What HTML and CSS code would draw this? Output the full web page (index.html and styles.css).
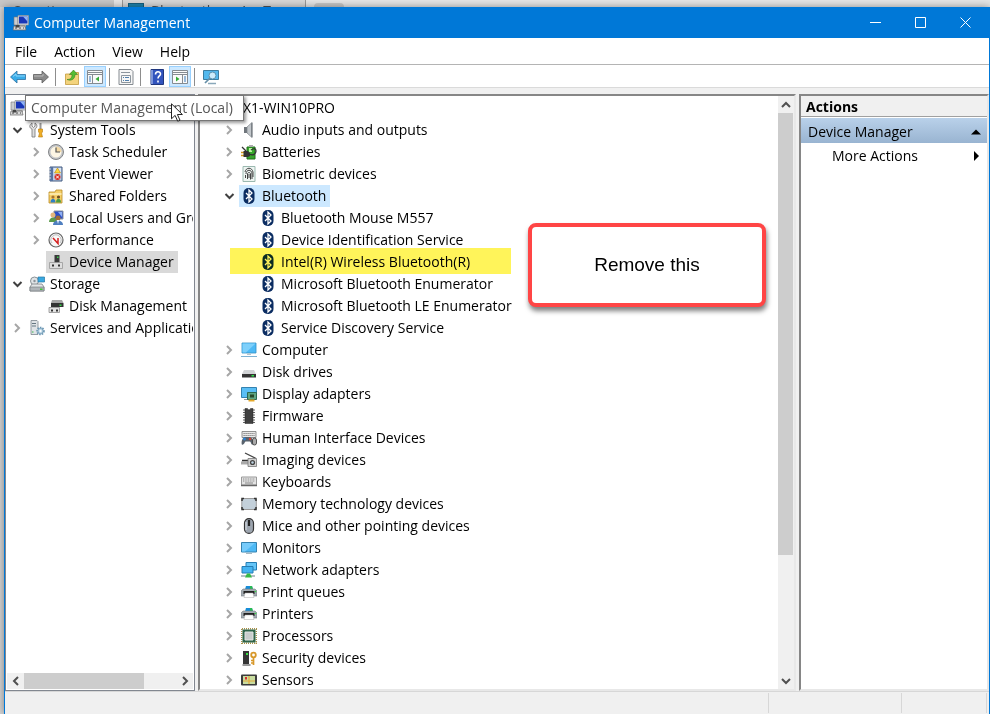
FILE: index.html
```
<!DOCTYPE html>
<html lang="en">
<head>
  <meta charset="UTF-8" />
  <meta name="viewport" content="width=device-width, initial-scale=1.0"/>
  <title>Computer Management</title>
  <link rel="stylesheet" href="styles.css">
</head>
<body>
  <!-- icon set -->
  <svg class="sprite" aria-hidden="true">
    <symbol id="right" viewBox="0 0 16 16"><path d="M6 4l4 4-4 4" fill="none" stroke="#a6a6a6" stroke-width="2"/></symbol>
    <symbol id="down" viewBox="0 0 16 16"><path d="M4.500 6 8.500 10l4-4" fill="none" stroke="#404040" stroke-width="2"/></symbol>
    <symbol id="mgmt" viewBox="0 0 16 16"><path d="M1 2h4v8H1z" fill="#c9cdd0" stroke="#777" stroke-width=".6"/><path d="M5 .5h10.500v9.500H5z" fill="#d8dce0" stroke="#8a8f94" stroke-width=".7"/><path d="M6 1.500h8.500v7H6z" fill="#1836b8"/><path d="M10 1.500h4.500v5z" fill="#8fb4f5"/><path d="M7 10h6v2H7z" fill="#aaa"/><path d="M1 11h11l1 4H0z" fill="#d9d9d9" stroke="#666" stroke-width=".7"/><path d="M3 10.500h3V12H3zM2 13h2M6 13h2M10 13h1" fill="#444" stroke="#444"/></symbol>
    <symbol id="tools" viewBox="0 0 16 16"><path d="M3 1v3l1.500 1.500L6 4V1c3 2 2 5 0 6v8H3V7C0 6 0 3 3 1z" fill="#ddd" stroke="#777" stroke-width=".8"/><path d="M10.500 1h2v6h-2z" fill="#999"/><path d="M9.500 7h4v3l-1 1 1 4h-4l1-4-1-1z" fill="#f0ae24" stroke="#b7780c" stroke-width=".6"/></symbol>
    <symbol id="clock" viewBox="0 0 16 16"><circle cx="8" cy="8" r="7.500" fill="#c4c6c9" stroke="#77797c" stroke-width=".9"/><circle cx="8" cy="8" r="5.500" fill="#fdf6e4"/><path d="M8 2.500A5.500 5.500 0 0 1 13.500 8H8z" fill="#f3d9a4"/><path d="M8 3.500V8h4" fill="none" stroke="#555" stroke-width="1.200"/></symbol>
    <symbol id="event" viewBox="0 0 16 16"><path d="M2 1h12v14H2z" fill="#b9cce6" stroke="#40587f"/><path d="M2 1h3v14H2z" fill="#5774a3"/><path d="M1 3h2M1 6h2M1 9h2M1 12h2" stroke="#ddd"/><path d="M6 3h7M6 5h7M6 7h7" stroke="#fff"/><path d="m9.500 2 3 5h-6z" fill="#ffd83b" stroke="#b98400" stroke-width=".6"/><circle cx="9.500" cy="11" r="3" fill="#d82c20"/><path d="m8 9.500 3 3m0-3-3 3" stroke="#fff"/></symbol>
    <symbol id="folder" viewBox="0 0 16 16"><path d="M1 4h6l1-2h6v13H1z" fill="#f5cf68" stroke="#b98b25" stroke-width=".8"/><path d="M1.500 5h12v2h-12z" fill="#fbe7a6"/><circle cx="5" cy="9" r="1.600" fill="#a87230"/><circle cx="10.500" cy="9" r="1.600" fill="#6c4b22"/><path d="M2.500 14.500c0-5 5-5 5 0z" fill="#2f7fc6"/><path d="M8 14.500c0-5 5-5 5 0z" fill="#4c9d41"/></symbol>
    <symbol id="users" viewBox="0 0 16 16"><path d="M6 1h9v8H6z" fill="#2a4ec7" stroke="#8c9299"/><path d="M10 2h4v5z" fill="#8fb0f3"/><circle cx="5" cy="5" r="2.500" fill="#e5b77c"/><path d="M1 12c0-6 8-6 8 0z" fill="#5b9a4a"/><circle cx="10" cy="8" r="2.500" fill="#9d6b37"/><path d="M5 15c0-6 10-6 10 0z" fill="#4f7fc0"/><path d="m9 10 1 4 1-4z" fill="#fff"/></symbol>
    <symbol id="perf" viewBox="0 0 16 16"><circle cx="8" cy="8" r="7" fill="#f8f8f8" stroke="#666" stroke-width="1.200"/><path d="M4 11a5 5 0 1 1 8 0" fill="none" stroke="#bbb"/><path d="m5 6 5 5.500V6" fill="none" stroke="#d41f1f" stroke-width="1.500"/></symbol>
    <symbol id="device" viewBox="0 0 16 16"><path d="M6.500 1h5v8h-5z" fill="#3a3a3a"/><path d="M9 2.500h1.500V4H9z" fill="#38d04b"/><path d="M1.500 8.500h13v6h-13z" fill="#dedede" stroke="#999" stroke-width=".8"/><path d="M4 10.500h2v2H4zM10 10.500h2v2h-2z" fill="#333"/></symbol>
    <symbol id="storage" viewBox="0 0 16 16"><circle cx="5.500" cy="5" r="4" fill="#e0e4e7" stroke="#8a9297"/><circle cx="5.500" cy="5" r="1.200" fill="#8b9398"/><path d="M9 1h6.500v5H9z" fill="#3aa8e0" stroke="#2878a4" stroke-width=".7"/><path d="m3 8-2 3v4h14v-4l-2-3z" fill="#e2e5e7" stroke="#7b8186" stroke-width=".8"/><path d="M1 11h14v4H1z" fill="#afb4b8" stroke="#6f757a" stroke-width=".6"/><path d="M11 12.500h2.500V14H11z" fill="#42c838"/></symbol>
    <symbol id="diskmgmt" viewBox="0 0 16 16"><path d="m4 2-1 3h12.500L14 2z" fill="#a5a5a5"/><path d="M3 5h12.500v4H3z" fill="#333"/><path d="M11.500 6.500h2V8h-2z" fill="#35d84a"/><path d="M1 9.500h10.500v5H1z" fill="#e2e2e2" stroke="#8f8f8f" stroke-width=".8"/><path d="M3 11.500h2v2H3zM8 11.500h2v2H8z" fill="#333"/></symbol>
    <symbol id="services" viewBox="0 0 16 16"><path d="M2 .5h6l1 1v13H2z" fill="#dfe3e6" stroke="#7c868e" stroke-width=".8"/><path d="M3 3.500h4M3 6h4" stroke="#657681"/><path d="M3 12h1.500" stroke="#36b34a"/><circle cx="11.500" cy="11" r="3.400" fill="#d4e5f0" stroke="#6e98b4" stroke-width="1.800" stroke-dasharray="1.500 1"/><circle cx="11.500" cy="11" r="2.600" fill="#c4dcea" stroke="#6e98b4" stroke-width=".8"/><circle cx="11.500" cy="11" r="1" fill="#fff"/></symbol>
    <symbol id="audio" viewBox="0 0 16 16"><path d="M3 5h3.500v6H3z" fill="#6f757b"/><path d="m6 5 5-4.500v15L6 11z" fill="#c2c7cb" stroke="#7d8388" stroke-width=".7"/><path d="M10 1.500v13l1.500 1V.5z" fill="#7c8287"/></symbol>
    <symbol id="battery" viewBox="0 0 16 16"><path d="M6 3h8v12H6z" fill="#37a92b" stroke="#206e1a"/><path d="M8 1h4v2H8z" fill="#aaa"/><path d="M8 4h3v4H8z" fill="#b8f5a0"/><path d="M0 8.500h3M0 11.500h3" stroke="#d19a1d" stroke-width="1.300"/><path d="M2.500 7H7l2 2v3l-2 1H2.500z" fill="#333"/><path d="M8 10c4 2 7 0 7-3s-2-3-5-1M1 3l4 4" fill="none" stroke="#333" stroke-width="1.300"/></symbol>
    <symbol id="finger" viewBox="0 0 16 16"><path d="M2 .5h12v15H2z" fill="#eef5f2" stroke="#9bb9b0"/><g fill="none" stroke="#444" stroke-width="1"><path d="M4 6c1-5 7-5 8 0v5M5 8c0-5 6-5 6 0v5M6.500 13V8c0-2 3-2 3 0v5.500M8 8v4M4.500 9v3"/></g></symbol>
    <symbol id="bt" viewBox="0 0 16 16"><rect x="2.500" y="0" width="11" height="16" rx="5" fill="#0b2d62"/><path d="m5 5 6 6-3 3V2l3 3-6 6" fill="none" stroke="#fff" stroke-width="1.300"/></symbol>
    <symbol id="computer" viewBox="0 0 16 16"><path d="M1 1h14v10H1z" fill="#4eb9f5" stroke="#318fc5" stroke-width=".8"/><path d="M1.500 1.500h13L5 10.500H1.500z" fill="#7ed0fb"/><path d="M6 11.500h4V13H6z" fill="#bbc5cb"/><path d="M0 14.500h16" stroke="#7fb2d3"/></symbol>
    <symbol id="disk" viewBox="0 0 16 16"><path d="m3 6-2 4h14l-2-4z" fill="#d1d3d5"/><path d="M1 10h14v3.500H1z" fill="#333"/><path d="M10.500 11H13v1.500h-2.500z" fill="#2fe048"/></symbol>
    <symbol id="display" viewBox="0 0 16 16"><path d="M.5 1.500h15v10H.5z" fill="#5abef5" stroke="#3482b0"/><path d="M3 13h4v1H3z" fill="#999"/><path d="M6.500 6.500h9v7h-9z" fill="#5fa583" stroke="#2c6850"/><path d="M9 8.500h4v3H9z" fill="#274929"/><path d="M7.500 13.500h6v2h-6z" fill="#e5a82a"/></symbol>
    <symbol id="chip" viewBox="0 0 16 16"><path d="M2 2h12M2 4.500h12M2 7h12M2 9.500h12M2 12h12M2 14.500h12" stroke="#666" stroke-width="1.200"/><path d="M4 .5h2.500c0 2 3 2 3 0H12v15H4z" fill="#404040" stroke="#222" stroke-width=".5"/></symbol>
    <symbol id="hid" viewBox="0 0 16 16"><path d="M1 1.500h14v6H1z" fill="#e8e8e8" stroke="#777" stroke-width=".8"/><path d="M2.500 3.500h11M2.500 5.500h11" stroke="#777" stroke-dasharray="1.200 .8"/><path d="M.8 14.500C0 11 2 7 4 7h5c2 0 4 4 3 7.500-2 1-2-3-3-3H4.500c-1 1-1.700 4-3.700 3z" fill="#59636d"/><circle cx="3.500" cy="9" r="1.400" fill="#2d82d4"/><circle cx="9" cy="9" r="1.200" fill="#d44132"/><rect x="11.500" y="8" width="4" height="7" rx="2" fill="#aaa" stroke="#444" stroke-width=".9"/></symbol>
    <symbol id="imaging" viewBox="0 0 16 16"><path d="m4 1 11 5.500" stroke="#444" stroke-width="1.300"/><path d="M0 9.500h8v3H0z" fill="#aaa"/><path d="M1 8.500h6" stroke="#333" stroke-width="1.500"/><path d="M7 6.500h8.500v8H7z" fill="#d0d0d0" stroke="#777" stroke-width=".8"/><circle cx="11.500" cy="10.500" r="2.600" fill="#444"/><circle cx="11.500" cy="10.500" r="1.200" fill="#bed4e4"/></symbol>
    <symbol id="keyboard" viewBox="0 0 16 16"><path d="M.5 3h15v8H.5z" fill="#e3e3e3" stroke="#999"/><path d="M2 5h12M2 7h12" stroke="#888" stroke-dasharray="1 .7"/><path d="M4 9h8" stroke="#888"/><path d="M0 11.500h16" stroke="#666" stroke-width="1.500"/></symbol>
    <symbol id="memory" viewBox="0 0 16 16"><rect x=".8" y="2.500" width="14.500" height="11" rx="1" fill="#c3d0da" stroke="#999"/><path d="M1 5V2.500h2M13 2.500h2V5M15 11v2.500h-2M3 13.500H1V11" fill="none" stroke="#333" stroke-width="1.500"/></symbol>
    <symbol id="mouse" viewBox="0 0 16 16"><rect x="3.500" y=".6" width="9" height="14.800" rx="4.500" fill="#9da5af" stroke="#333" stroke-width="1.200"/><path d="M8 2v6" stroke="#222" stroke-width="2.200"/><path d="M5 4v8" stroke="#dce1e7"/></symbol>
    <symbol id="monitor" viewBox="0 0 16 16"><path d="M.5 2.500h15v9.500H.5z" fill="#4eb9f5" stroke="#3482b0"/><path d="M1 3h13L4 11.500H1z" fill="#76cbfb"/><path d="M5 13.500h6" stroke="#a8b7c0"/></symbol>
    <symbol id="network" viewBox="0 0 16 16"><path d="M5 .5h10.500v7.500H5z" fill="#65c5f8" stroke="#247db4"/><path d="M1 4.500h11V11H1z" fill="#44b4f2" stroke="#247db4"/><path d="M0 14h14" stroke="#b5c0c5" stroke-width="2"/><path d="M6 11.500h3l2 4H4z" fill="#36ba45"/></symbol>
    <symbol id="printer" viewBox="0 0 16 16"><path d="M5 2h6l1 3.500H4z" fill="#168dd8"/><path d="M9 2h2l1 3.500H9z" fill="#2abb52"/><path d="M2 5h12l2 2v5H0V7z" fill="#a3abb1" stroke="#777e83" stroke-width=".6"/><path d="M2.500 7h11v3h-11z" fill="#222"/><path d="m4 9-1 4.500h10L12 9z" fill="#fff" stroke="#aaa" stroke-width=".5"/><circle cx="14.500" cy="7.500" r=".8" fill="#36df45"/></symbol>
    <symbol id="cpu" viewBox="0 0 16 16"><path d="M1 .7h15M1 15.300h15M.7 1v15M15.300 1v15" stroke="#a89047" stroke-dasharray="1 1" stroke-width="1.400"/><path d="M1.500 1.500h13v13h-13z" fill="#2f6449"/><path d="M4 4h8v8H4z" fill="#c9cdcc" stroke="#e3e6e5"/></symbol>
    <symbol id="security" viewBox="0 0 16 16"><path d="M2 1h6v13H2z" fill="#353535"/><path d="M1.500 15h8" stroke="#333"/><path d="M5 3h2v2H5z" fill="#38df43"/><circle cx="12.500" cy="5" r="2.300" fill="none" stroke="#d7982a" stroke-width="1.800"/><path d="M12.500 7.500V15M12 10.500h-2M12 13h-2" stroke="#d7982a" stroke-width="1.700"/></symbol>
    <symbol id="sensor" viewBox="0 0 16 16"><rect x="0" y="2.500" width="16" height="11" rx="1" fill="#3d3d3d"/><path d="M2 4h12v8H2z" fill="#c9dda0"/><path d="M8 4v8M2 9h12" stroke="#e5aa3b" stroke-width="1.200"/><path d="M4 5h2v2.500H4z" fill="#d92f2f"/></symbol>
    <symbol id="back" viewBox="0 0 16 16"><path d="m.5 8 6.500-6v3.500h8.500v5H7V14z" fill="#39ace8" stroke="#2c6f9f" stroke-width=".8"/><path d="M3 7.500 6 5v2h9" fill="none" stroke="#8bd6fa"/></symbol>
    <symbol id="forward" viewBox="0 0 16 16"><path d="M15.500 8 9 2v3.500H.5v5H9V14z" fill="#8a8a8a" stroke="#5d5d5d" stroke-width=".8"/><path d="M1 7h9V5" fill="none" stroke="#b9b9b9"/></symbol>
    <symbol id="up" viewBox="0 0 16 16"><path d="M1.500 5H6l1-1.500h7.500v12h-13z" fill="#f3d37c" stroke="#c39b3d" stroke-width=".8"/><path d="M3 10.500c4 0 5-2 5-5H5.500l4-4.500 4 4.500H11c0 4-3 7-8 5z" fill="#55bd35" stroke="#37811f" stroke-width=".6"/></symbol>
    <symbol id="tree-pane" viewBox="0 0 16 16"><path d="M.5 1.500h15v13H.5z" fill="#fafafa" stroke="#858b91"/><path d="M1 3.500h14M1 5.500h14" stroke="#858b91"/><path d="M5.500 6v9" stroke="#858b91"/><path d="M2 8h2M2 10h2M2 12h2" stroke="#3979b7"/><path d="M12 7.500v5L8.500 10z" fill="#35aa36"/></symbol>
    <symbol id="props" viewBox="0 0 16 16"><path d="M1 .5h12l2 2v13H1z" fill="#f6f6f6" stroke="#858b91"/><path d="M3 3.500h9M3.500 6.500h9v7h-9z" fill="none" stroke="#8c959d"/><path d="M5 8.500h1M7 8.500h4M5 11.500h1M7 11.500h4" stroke="#507fac"/></symbol>
    <symbol id="help" viewBox="0 0 16 16"><path d="M2 .5h12.500v15H2z" fill="#3153bd" stroke="#20377e"/><path d="M2 1h2v14H2z" fill="#7d95d9"/><path d="M6.500 5.500c0-3.500 5-3.500 5-.5 0 2-2.500 2-2.500 4.500M9 11.500v2" fill="none" stroke="#fff" stroke-width="1.600"/></symbol>
    <symbol id="action-pane" viewBox="0 0 16 16"><path d="M.5 1.500h15v13H.5z" fill="#fafafa" stroke="#858b91"/><path d="M1 3.500h14M1 5.500h14M10.500 6v9" stroke="#858b91"/><path d="M12 8h2M12 10h2M12 12h2" stroke="#3979b7"/><path d="M4 7.500v5L7.500 10z" fill="#35aa36"/></symbol>
    <symbol id="scan" viewBox="0 0 16 16"><path d="M.5 1.500h15v9H.5z" fill="#53b9ee" stroke="#3c7d9f"/><path d="M5 14.500h8" stroke="#8aa8ba" stroke-width="1.500"/><circle cx="9.500" cy="6.500" r="3.500" fill="#ccecfb" stroke="#5b91ae"/><path d="m7 9-5 5" stroke="#668fa7" stroke-width="1.700"/></symbol>
  </svg>

  <div class="tabs" aria-hidden="true">
    <span class="tab tab-first">n Questions</span>
    <span class="tab tab-active"><i class="favicon"></i>Bluetooth on A... T</span>
    <span class="tab tab-new"></span>
  </div>

  <div class="window">
    <header class="titlebar">
      <svg class="icon"><use href="#mgmt"/></svg>
      <h1>Computer Management</h1>
      <div class="controls">
        <button type="button" aria-label="Minimize"><svg viewBox="0 0 11 11"><path d="M0 5.500h11"/></svg></button>
        <button type="button" aria-label="Maximize"><svg viewBox="0 0 11 11"><path d="M.5.5h10v10H.5z"/></svg></button>
        <button type="button" aria-label="Close"><svg viewBox="0 0 11 11"><path d="m.5.5 10 10m0-10-10 10"/></svg></button>
      </div>
    </header>

    <nav class="menubar">
      <button type="button">File</button>
      <button type="button">Action</button>
      <button type="button">View</button>
      <button type="button">Help</button>
    </nav>

    <div class="toolbar">
      <button type="button" aria-label="Back"><svg class="icon"><use href="#back"/></svg></button>
      <button type="button" aria-label="Forward"><svg class="icon"><use href="#forward"/></svg></button>
      <span class="sep"></span>
      <button type="button" aria-label="Up one level"><svg class="icon"><use href="#up"/></svg></button>
      <button type="button" class="on" aria-label="Console tree"><svg class="icon"><use href="#tree-pane"/></svg></button>
      <span class="sep"></span>
      <button type="button" aria-label="Properties"><svg class="icon"><use href="#props"/></svg></button>
      <span class="sep"></span>
      <button type="button" aria-label="Help"><svg class="icon"><use href="#help"/></svg></button>
      <button type="button" class="on" aria-label="Action pane"><svg class="icon"><use href="#action-pane"/></svg></button>
      <span class="sep"></span>
      <button type="button" aria-label="Scan for hardware changes"><svg class="icon"><use href="#scan"/></svg></button>
    </div>

    <main class="panes">
      <section class="pane console">
        <div class="tree-view">
          <div class="row root"><span class="label"><svg class="icon"><use href="#mgmt"/></svg></span></div>
          <div class="tooltip">Computer Management (Local)
            <svg class="cursor" viewBox="0 0 12 19"><path d="M.5.8v15l3.600-3.400 2.600 5.800 2.300-1-2.600-5.700h5z" fill="#fff" stroke="#222"/></svg>
          </div>
          <ul class="tree">
            <li>
              <div class="row"><button type="button" class="toggle" aria-label="Collapse"><svg class="icon"><use href="#down"/></svg></button><span class="label"><svg class="icon"><use href="#tools"/></svg>System Tools</span></div>
              <ul>
                <li class="row"><button type="button" class="toggle" aria-label="Expand"><svg class="icon"><use href="#right"/></svg></button><span class="label"><svg class="icon"><use href="#clock"/></svg>Task Scheduler</span></li>
                <li class="row"><button type="button" class="toggle" aria-label="Expand"><svg class="icon"><use href="#right"/></svg></button><span class="label"><svg class="icon"><use href="#event"/></svg>Event Viewer</span></li>
                <li class="row"><button type="button" class="toggle" aria-label="Expand"><svg class="icon"><use href="#right"/></svg></button><span class="label"><svg class="icon"><use href="#folder"/></svg>Shared Folders</span></li>
                <li class="row"><button type="button" class="toggle" aria-label="Expand"><svg class="icon"><use href="#right"/></svg></button><span class="label"><svg class="icon"><use href="#users"/></svg>Local Users and Groups</span></li>
                <li class="row"><button type="button" class="toggle" aria-label="Expand"><svg class="icon"><use href="#right"/></svg></button><span class="label"><svg class="icon"><use href="#perf"/></svg>Performance</span></li>
                <li class="row leaf"><span class="label current"><svg class="icon"><use href="#device"/></svg>Device Manager</span></li>
              </ul>
            </li>
            <li>
              <div class="row"><button type="button" class="toggle" aria-label="Collapse"><svg class="icon"><use href="#down"/></svg></button><span class="label"><svg class="icon"><use href="#storage"/></svg>Storage</span></div>
              <ul>
                <li class="row leaf"><span class="label"><svg class="icon"><use href="#diskmgmt"/></svg>Disk Management</span></li>
              </ul>
            </li>
            <li class="row"><button type="button" class="toggle" aria-label="Expand"><svg class="icon"><use href="#right"/></svg></button><span class="label"><svg class="icon"><use href="#services"/></svg>Services and Applications</span></li>
          </ul>
        </div>
        <div class="scroll scroll-x">
          <button type="button" aria-label="Scroll left"><svg viewBox="0 0 10 10"><path d="M7 1 3 5l4 4"/></svg></button>
          <div class="track"><div class="thumb"></div></div>
          <button type="button" aria-label="Scroll right"><svg viewBox="0 0 10 10"><path d="m3 1 4 4-4 4"/></svg></button>
        </div>
      </section>

      <section class="pane sunken devices">
        <div class="tree-view">
          <div class="row root"><span class="label"><svg class="icon"><use href="#computer"/></svg>X1-WIN10PRO</span></div>
          <ul class="tree">
            <li class="row"><button type="button" class="toggle" aria-label="Expand"><svg class="icon"><use href="#right"/></svg></button><span class="label"><svg class="icon"><use href="#audio"/></svg>Audio inputs and outputs</span></li>
            <li class="row"><button type="button" class="toggle" aria-label="Expand"><svg class="icon"><use href="#right"/></svg></button><span class="label"><svg class="icon"><use href="#battery"/></svg>Batteries</span></li>
            <li class="row"><button type="button" class="toggle" aria-label="Expand"><svg class="icon"><use href="#right"/></svg></button><span class="label"><svg class="icon"><use href="#finger"/></svg>Biometric devices</span></li>
            <li>
              <div class="row"><button type="button" class="toggle" aria-label="Collapse"><svg class="icon"><use href="#down"/></svg></button><span class="label selected"><svg class="icon"><use href="#bt"/></svg>Bluetooth</span></div>
              <ul>
                <li class="row leaf"><span class="label"><svg class="icon"><use href="#bt"/></svg>Bluetooth Mouse M557</span></li>
                <li class="row leaf"><span class="label"><svg class="icon"><use href="#bt"/></svg>Device Identification Service</span></li>
                <li class="row leaf marked"><span class="label"><svg class="icon"><use href="#bt"/></svg>Intel(R) Wireless Bluetooth(R)</span></li>
                <li class="row leaf"><span class="label"><svg class="icon"><use href="#bt"/></svg>Microsoft Bluetooth Enumerator</span></li>
                <li class="row leaf"><span class="label"><svg class="icon"><use href="#bt"/></svg>Microsoft Bluetooth LE Enumerator</span></li>
                <li class="row leaf"><span class="label"><svg class="icon"><use href="#bt"/></svg>Service Discovery Service</span></li>
              </ul>
            </li>
            <li class="row"><button type="button" class="toggle" aria-label="Expand"><svg class="icon"><use href="#right"/></svg></button><span class="label"><svg class="icon"><use href="#computer"/></svg>Computer</span></li>
            <li class="row"><button type="button" class="toggle" aria-label="Expand"><svg class="icon"><use href="#right"/></svg></button><span class="label"><svg class="icon"><use href="#disk"/></svg>Disk drives</span></li>
            <li class="row"><button type="button" class="toggle" aria-label="Expand"><svg class="icon"><use href="#right"/></svg></button><span class="label"><svg class="icon"><use href="#display"/></svg>Display adapters</span></li>
            <li class="row"><button type="button" class="toggle" aria-label="Expand"><svg class="icon"><use href="#right"/></svg></button><span class="label"><svg class="icon"><use href="#chip"/></svg>Firmware</span></li>
            <li class="row"><button type="button" class="toggle" aria-label="Expand"><svg class="icon"><use href="#right"/></svg></button><span class="label"><svg class="icon"><use href="#hid"/></svg>Human Interface Devices</span></li>
            <li class="row"><button type="button" class="toggle" aria-label="Expand"><svg class="icon"><use href="#right"/></svg></button><span class="label"><svg class="icon"><use href="#imaging"/></svg>Imaging devices</span></li>
            <li class="row"><button type="button" class="toggle" aria-label="Expand"><svg class="icon"><use href="#right"/></svg></button><span class="label"><svg class="icon"><use href="#keyboard"/></svg>Keyboards</span></li>
            <li class="row"><button type="button" class="toggle" aria-label="Expand"><svg class="icon"><use href="#right"/></svg></button><span class="label"><svg class="icon"><use href="#memory"/></svg>Memory technology devices</span></li>
            <li class="row"><button type="button" class="toggle" aria-label="Expand"><svg class="icon"><use href="#right"/></svg></button><span class="label"><svg class="icon"><use href="#mouse"/></svg>Mice and other pointing devices</span></li>
            <li class="row"><button type="button" class="toggle" aria-label="Expand"><svg class="icon"><use href="#right"/></svg></button><span class="label"><svg class="icon"><use href="#monitor"/></svg>Monitors</span></li>
            <li class="row"><button type="button" class="toggle" aria-label="Expand"><svg class="icon"><use href="#right"/></svg></button><span class="label"><svg class="icon"><use href="#network"/></svg>Network adapters</span></li>
            <li class="row"><button type="button" class="toggle" aria-label="Expand"><svg class="icon"><use href="#right"/></svg></button><span class="label"><svg class="icon"><use href="#printer"/></svg>Print queues</span></li>
            <li class="row"><button type="button" class="toggle" aria-label="Expand"><svg class="icon"><use href="#right"/></svg></button><span class="label"><svg class="icon"><use href="#printer"/></svg>Printers</span></li>
            <li class="row"><button type="button" class="toggle" aria-label="Expand"><svg class="icon"><use href="#right"/></svg></button><span class="label"><svg class="icon"><use href="#cpu"/></svg>Processors</span></li>
            <li class="row"><button type="button" class="toggle" aria-label="Expand"><svg class="icon"><use href="#right"/></svg></button><span class="label"><svg class="icon"><use href="#security"/></svg>Security devices</span></li>
            <li class="row"><button type="button" class="toggle" aria-label="Expand"><svg class="icon"><use href="#right"/></svg></button><span class="label"><svg class="icon"><use href="#sensor"/></svg>Sensors</span></li>
          </ul>
        </div>
        <div class="scroll scroll-y">
          <button type="button" aria-label="Scroll up"><svg viewBox="0 0 10 10"><path d="m1 7 4-4 4 4"/></svg></button>
          <div class="track"><div class="thumb"></div></div>
          <button type="button" aria-label="Scroll down"><svg viewBox="0 0 10 10"><path d="m1 3 4 4 4-4"/></svg></button>
        </div>
        <div class="callout">Remove this</div>
      </section>

      <aside class="pane sunken actions">
        <h2>Actions</h2>
        <button type="button" class="group">Device Manager<svg class="arrow" viewBox="0 0 10 10"><path d="M0 7.500 5 2.500l5 5z"/></svg></button>
        <button type="button" class="more">More Actions<svg class="arrow" viewBox="0 0 10 10"><path d="m3 0 5 5-5 5z"/></svg></button>
      </aside>
    </main>

    <footer class="statusbar"><span></span><span></span><span></span></footer>
  </div>
</body>
</html>
```
FILE: styles.css
```
* {
  box-sizing: border-box;
}

body {
  margin: 0;
  height: 100vh;
  padding: 7px 0 0 4px;
  overflow: hidden;
  background-color: #d4d4d4;
  font-family: "Open Sans", "Noto Sans", sans-serif;
  font-size: 14px;
  line-height: 22px;
  color: #000;
}

ul {
  list-style: none;
  margin: 0;
  padding: 0;
}

button {
  padding: 0;
  border: none;
  background: none;
  font: inherit;
  color: inherit;
}

.sprite {
  position: absolute;
  width: 0;
  height: 0;
}

.icon {
  display: block;
  flex: none;
  width: 16px;
  height: 16px;
}

/* browser tabs behind the window */
.tabs {
  position: absolute;
  top: 0;
  left: 0;
  right: 0;
  height: 7px;
  display: flex;
  gap: 8px;
  overflow: hidden;
  background-color: #e6e6e6;
  color: #555;
}

.tab {
  height: 30px;
  overflow: hidden;
  white-space: nowrap;
  background-color: #c8c8c8;
}

.tab-first {
  width: 114px;
}

.tab-active {
  display: flex;
  gap: 7px;
  width: 184px;
  padding-left: 5px;
  background-color: #d8d8d8;
  border-left: 1px solid #999;
  border-right: 1px solid #999;
}

.favicon {
  width: 16px;
  height: 16px;
  margin-top: 3px;
  background-color: #1d83ae;
  border: 1px solid #155f7f;
}

.tab-new {
  width: 30px;
  height: 20px;
  margin-top: 3px;
  border-radius: 4px;
}

.window {
  position: relative;
  display: flex;
  flex-direction: column;
  height: 100%;
  background-color: #f0f0f0;
  border-left: 1px solid #0078d7;
  border-right: 1px solid #0078d7;
  box-shadow: 0 0 8px rgba(0, 0, 0, 0.4);
}

.titlebar {
  display: flex;
  align-items: center;
  gap: 5px;
  height: 31px;
  padding: 0 1px 0 8px;
  background-color: #0078d7;
  color: #fff;
}

.titlebar h1 {
  margin: 0;
  flex: 1;
  font-size: 14px;
  font-weight: normal;
}

.controls {
  display: flex;
}

.controls button {
  display: flex;
  align-items: center;
  justify-content: center;
  width: 45px;
  height: 31px;
}

.controls svg {
  width: 11px;
  height: 11px;
  fill: none;
  stroke: #fff;
}

.menubar {
  display: flex;
  gap: 17px;
  height: 27px;
  padding: 3px 10px 1px;
  background-color: #fff;
  border-bottom: 1px solid #b4b4b4;
}

.toolbar {
  display: flex;
  align-items: center;
  gap: 1px;
  height: 23px;
  padding: 1px 0 0 2px;
  background-color: #fff;
  border-bottom: 1px solid #dadada;
}

.toolbar button {
  display: flex;
  align-items: center;
  justify-content: center;
  width: 22px;
  height: 21px;
}

.toolbar .on {
  background-color: #cce8ff;
  border: 1px solid #99d1ff;
}

.sep {
  width: 1px;
  height: 18px;
  margin: 0 4px 0 2px;
  background-color: #8d8d8d;
}

.panes {
  flex: 1;
  min-height: 0;
  display: flex;
  gap: 3px;
  padding-top: 6px;
}

.pane {
  background-color: #fff;
}

.sunken {
  border: 2px solid;
  border-color: #868686 #e8e8e8 #e8e8e8 #868686;
}

.console {
  position: relative;
  display: flex;
  flex-direction: column;
  width: 190px;
  padding: 1px;
  border: 1px solid #828790;
}

.tree-view {
  flex: 1;
  min-width: 0;
  min-height: 0;
  padding-top: 1px;
  overflow: hidden;
}

.row {
  position: relative;
  display: flex;
  height: 22px;
}

.root {
  padding-left: 1px;
}

.tree ul {
  padding-left: 19px;
}

.leaf {
  padding-left: 20px;
}

.toggle {
  display: flex;
  flex: none;
  align-items: center;
  justify-content: center;
  width: 20px;
}

.label {
  display: flex;
  flex: none;
  align-items: center;
  gap: 5px;
  padding: 0 4px 0 2px;
  white-space: nowrap;
}

.current {
  background-color: #d9d9d9;
}

.selected {
  background-color: #cce8ff;
}

/* yellow marker stroke over one device */
.marked::after {
  content: "";
  position: absolute;
  top: -3px;
  left: -8px;
  width: 281px;
  height: 26px;
  background-color: #fff45a;
  mix-blend-mode: multiply;
}

.tooltip {
  position: absolute;
  z-index: 2;
  top: 0;
  left: 19px;
  padding: 1px 10px 1px 5px;
  background-color: #fff;
  border: 1px solid #767676;
  box-shadow: 2px 2px 3px rgba(0, 0, 0, 0.4);
  color: #575757;
  white-space: nowrap;
}

.cursor {
  position: absolute;
  top: 7px;
  left: 145px;
  width: 12px;
  height: 19px;
}

.scroll {
  display: flex;
  flex: none;
  background-color: #f0f0f0;
}

.scroll button {
  display: flex;
  flex: none;
  align-items: center;
  justify-content: center;
  width: 17px;
  height: 16px;
}

.scroll svg {
  width: 10px;
  height: 10px;
  fill: none;
  stroke: #505050;
  stroke-width: 2;
}

.scroll .track {
  flex: 1;
}

.scroll .thumb {
  background-color: #cdcdcd;
}

.scroll-x .thumb {
  width: 79%;
  height: 100%;
}

.scroll-y {
  flex-direction: column;
  width: 16px;
}

.scroll-y button {
  width: 15px;
  height: 17px;
}

.scroll-y .thumb {
  width: 15px;
  height: 79%;
}

.devices {
  position: relative;
  flex: 1;
  min-width: 0;
  display: flex;
}

.devices .tree-view {
  padding-left: 19px;
}

.callout {
  position: absolute;
  top: 127px;
  right: 28px;
  display: flex;
  align-items: center;
  justify-content: center;
  width: 238px;
  height: 84px;
  background-color: #fff;
  border: 4px solid #ff4545;
  border-radius: 8px;
  box-shadow: 1px 4px 5px rgba(0, 0, 0, 0.5);
  font-family: "Liberation Sans", Arial, sans-serif;
  font-size: 19px;
}

.actions {
  display: flex;
  flex-direction: column;
  width: 190px;
}

.actions h2 {
  margin: 0 0 1px;
  height: 21px;
  padding-left: 5px;
  background-color: #f0f0f0;
  border-bottom: 1px solid #a0a0a0;
  font-size: 14px;
  font-weight: bold;
}

.actions button {
  display: flex;
  align-items: center;
  justify-content: space-between;
  height: 25px;
  padding: 0 6px 0 7px;
}

.actions .group {
  padding-top: 2px;
  background: linear-gradient(#b9d1ea, #99b4d1);
}

.actions .more {
  padding-left: 31px;
}

.arrow {
  width: 10px;
  height: 10px;
}

.statusbar {
  display: flex;
  justify-content: flex-end;
  height: 23px;
  border-top: 1px solid #d7d7d7;
  padding: 1px 2px 1px 0;
}

.statusbar span {
  width: 133px;
  border-right: 1px solid #d7d7d7;
}

.statusbar span:last-child {
  width: 85px;
}
```
